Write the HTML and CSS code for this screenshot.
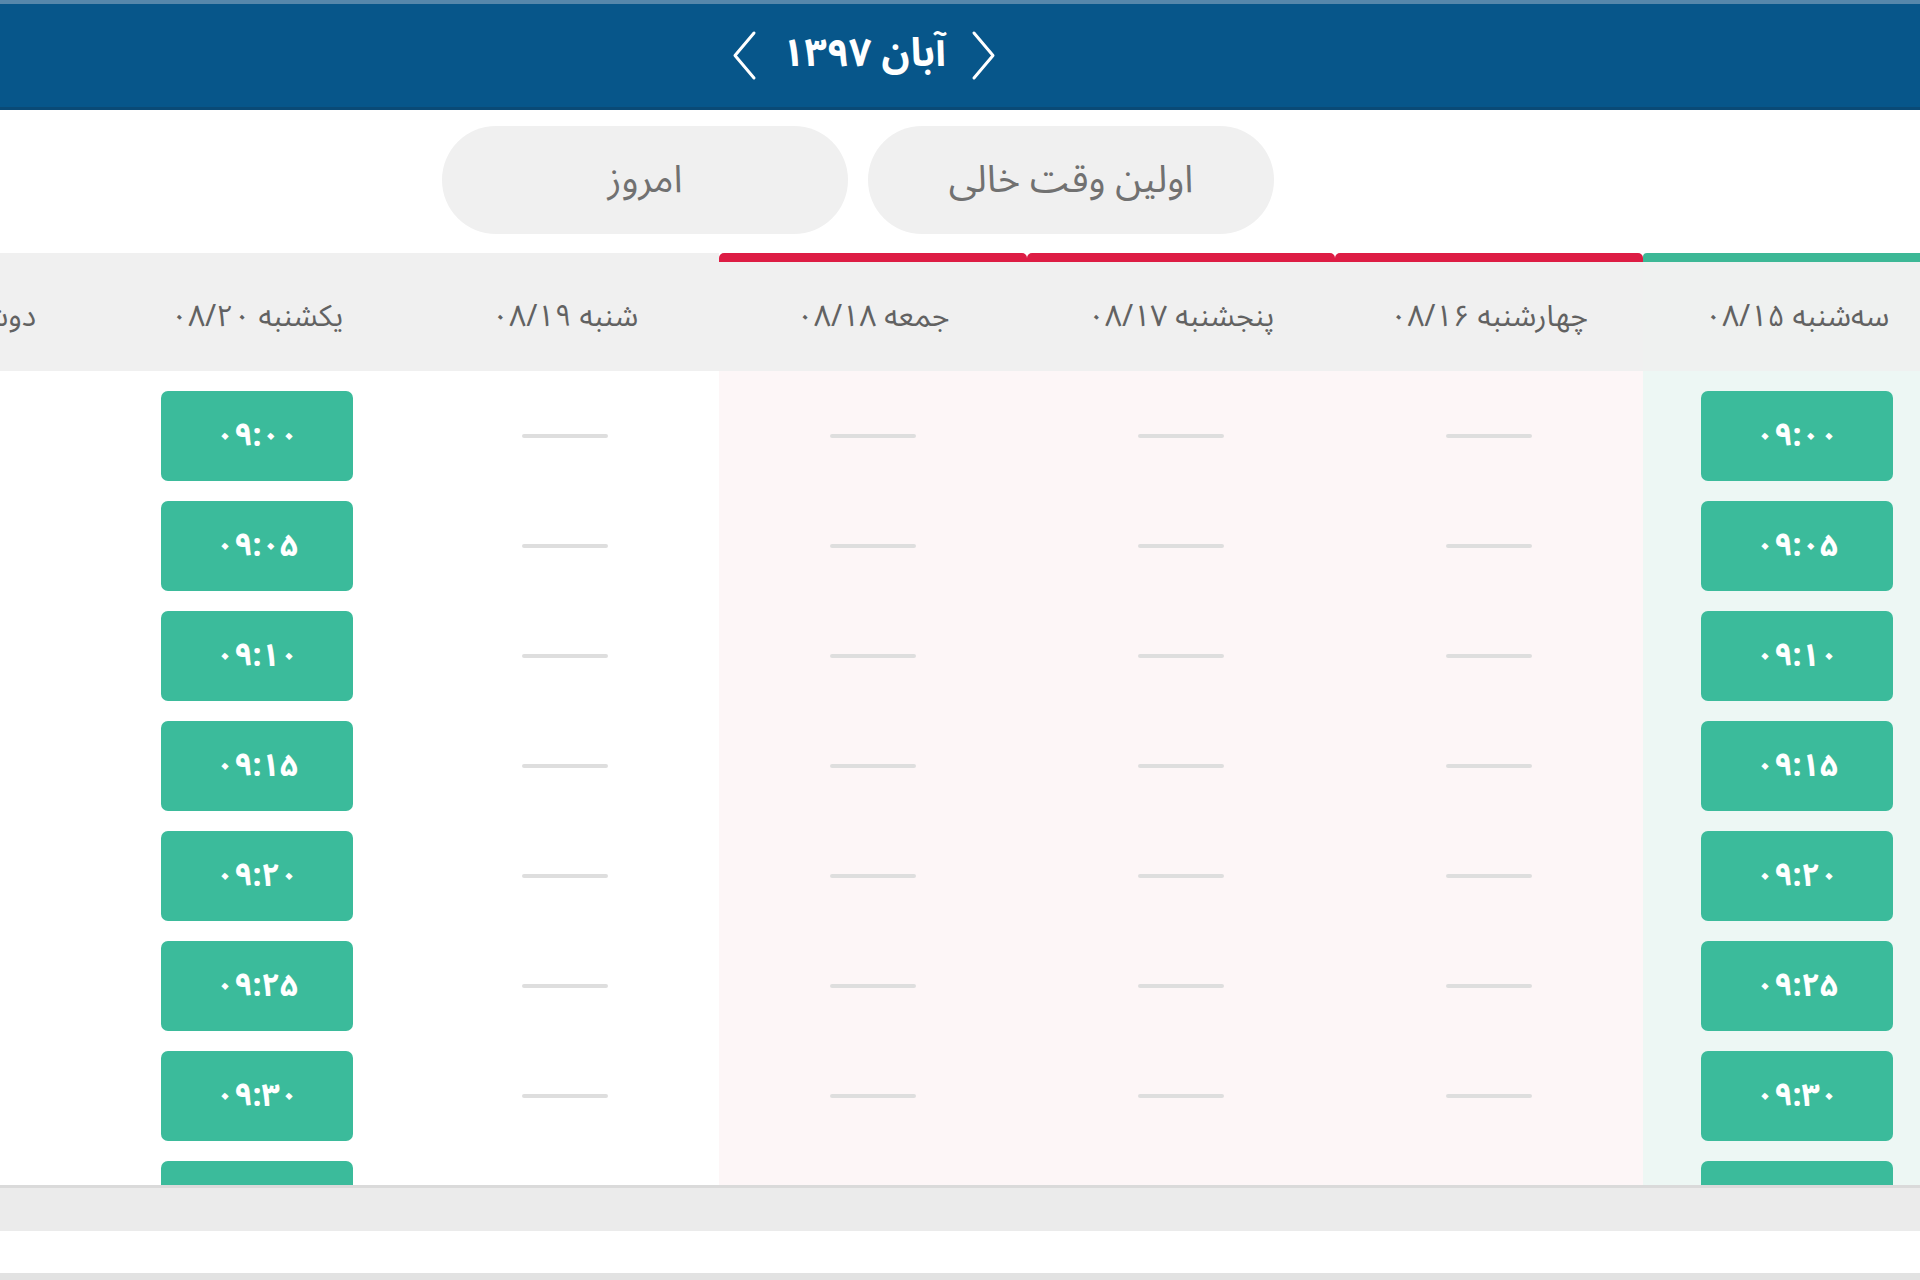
FILE: index.html
```html
<!DOCTYPE html>
<html lang="fa">
<head>
<meta charset="utf-8">
<title>نوبت‌دهی</title>
<link rel="stylesheet" href="styles.css">
</head>
<body>
<header class="topbar">
  <div class="topbar-zone">
    <nav class="month-nav">
      <svg class="chev" width="28" height="51" viewBox="0 0 28 51"><polyline points="24,3 5,25.5 24,48" fill="none" stroke="#ffffff" stroke-width="3" stroke-linecap="round" stroke-linejoin="round"/></svg>
      <span class="month-title" dir="rtl">آبان ۱۳۹۷</span>
      <svg class="chev" width="28" height="51" viewBox="0 0 28 51"><polyline points="4,3 23,25.5 4,48" fill="none" stroke="#ffffff" stroke-width="3" stroke-linecap="round" stroke-linejoin="round"/></svg>
    </nav>
  </div>
</header>

<section class="actions">
  <div class="actions-zone" dir="rtl">
    <button class="pill">اولین وقت خالی</button>
    <button class="pill">امروز</button>
  </div>
</section>

<main class="days" dir="rtl">
  <div class="day today">
    <div class="day-head">سه‌شنبه ۰۸/۱۵</div>
    <div class="day-body">
      <button class="slot">۰۹:۰۰</button>
      <button class="slot">۰۹:۰۵</button>
      <button class="slot">۰۹:۱۰</button>
      <button class="slot">۰۹:۱۵</button>
      <button class="slot">۰۹:۲۰</button>
      <button class="slot">۰۹:۲۵</button>
      <button class="slot">۰۹:۳۰</button>
      <button class="slot">۰۹:۳۵</button>
    </div>
  </div>
  <div class="day closed">
    <div class="day-head">چهارشنبه ۰۸/۱۶</div>
    <div class="day-body">
      <span class="empty"></span><span class="empty"></span><span class="empty"></span><span class="empty"></span><span class="empty"></span><span class="empty"></span><span class="empty"></span>
    </div>
  </div>
  <div class="day closed">
    <div class="day-head">پنجشنبه ۰۸/۱۷</div>
    <div class="day-body">
      <span class="empty"></span><span class="empty"></span><span class="empty"></span><span class="empty"></span><span class="empty"></span><span class="empty"></span><span class="empty"></span>
    </div>
  </div>
  <div class="day closed">
    <div class="day-head">جمعه ۰۸/۱۸</div>
    <div class="day-body">
      <span class="empty"></span><span class="empty"></span><span class="empty"></span><span class="empty"></span><span class="empty"></span><span class="empty"></span><span class="empty"></span>
    </div>
  </div>
  <div class="day">
    <div class="day-head">شنبه ۰۸/۱۹</div>
    <div class="day-body">
      <span class="empty"></span><span class="empty"></span><span class="empty"></span><span class="empty"></span><span class="empty"></span><span class="empty"></span><span class="empty"></span>
    </div>
  </div>
  <div class="day">
    <div class="day-head">یکشنبه ۰۸/۲۰</div>
    <div class="day-body">
      <button class="slot">۰۹:۰۰</button>
      <button class="slot">۰۹:۰۵</button>
      <button class="slot">۰۹:۱۰</button>
      <button class="slot">۰۹:۱۵</button>
      <button class="slot">۰۹:۲۰</button>
      <button class="slot">۰۹:۲۵</button>
      <button class="slot">۰۹:۳۰</button>
      <button class="slot">۰۹:۳۵</button>
    </div>
  </div>
  <div class="day">
    <div class="day-head">دوشنبه ۰۸/۲۱</div>
    <div class="day-body">
      <span class="empty"></span><span class="empty"></span><span class="empty"></span><span class="empty"></span><span class="empty"></span><span class="empty"></span><span class="empty"></span>
    </div>
  </div>
</main>

<div class="hscroll"></div>
<div class="bottom-space"></div>
<div class="bottom-line"></div>
</body>
</html>
```

FILE: styles.css
```css
html, body {
  margin: 0;
  padding: 0;
}
body {
  width: 1920px;
  height: 1280px;
  overflow: hidden;
  background: #ffffff;
  font-family: "Noto Sans Arabic", "DejaVu Sans", sans-serif;
}

.topbar {
  height: 103px;
  background: #07568a;
  border-top: 4px solid #5687ab;
  border-bottom: 3px solid #0a4a76;
}
.topbar-zone {
  width: 1728px;
  height: 100%;
  display: flex;
  justify-content: center;
  align-items: center;
}
.month-nav {
  display: flex;
  align-items: center;
  gap: 24px;
  direction: ltr;
}
.chev {
  display: block;
}
.month-title {
  color: #ffffff;
  font-size: 39px;
  font-weight: bold;
  line-height: 1;
  padding-bottom: 4px;
}

.actions {
  height: 143px;
  box-sizing: border-box;
  padding-top: 16px;
}
.actions-zone {
  width: 1716px;
  display: flex;
  justify-content: center;
  gap: 20px;
}
.pill {
  width: 406px;
  height: 108px;
  border: none;
  border-radius: 54px;
  background: #f0f0f0;
  color: #717171;
  font-family: inherit;
  font-size: 38px;
  padding: 0;
}

.days {
  display: flex;
  height: 932px;
  margin-right: -31px;
  overflow: hidden;
}
.day {
  flex: 0 0 308px;
  display: flex;
  flex-direction: column;
  border-top: 9px solid #f0f0f0;
  box-sizing: border-box;
}
.day.today {
  border-top-color: #3cb896;
  border-top-left-radius: 4px;
  border-top-right-radius: 4px;
}
.day.closed {
  border-top-color: #dd1c44;
  border-top-left-radius: 5px;
  border-top-right-radius: 5px;
}
.day-head {
  height: 109px;
  flex: 0 0 109px;
  display: flex;
  align-items: center;
  justify-content: center;
  background: #f0f0f0;
  color: #626262;
  font-size: 30px;
}
.day.today .day-head {
  background: #eff1f0;
}
.day-body {
  flex: 1;
  display: flex;
  flex-direction: column;
  align-items: center;
  gap: 20px;
  padding-top: 20px;
  overflow: hidden;
  background: #ffffff;
}
.day.today .day-body {
  background: #edf7f4;
}
.day.closed .day-body {
  background: #fdf6f7;
}
.slot {
  flex: 0 0 90px;
  width: 192px;
  height: 90px;
  border: none;
  border-radius: 7px;
  background: #3bbb9b;
  color: #ffffff;
  font-family: inherit;
  font-size: 32px;
  font-weight: bold;
  padding: 0;
}
.empty {
  flex: 0 0 90px;
  display: flex;
  align-items: center;
  justify-content: center;
}
.empty::before {
  content: "";
  width: 86px;
  height: 4px;
  border-radius: 2px;
  background: #dedede;
}

.hscroll {
  height: 43px;
  background: #ebebeb;
  border-top: 3px solid #dadada;
}
.bottom-space {
  height: 42px;
}
.bottom-line {
  height: 7px;
  background: #e2e2e2;
}
```
